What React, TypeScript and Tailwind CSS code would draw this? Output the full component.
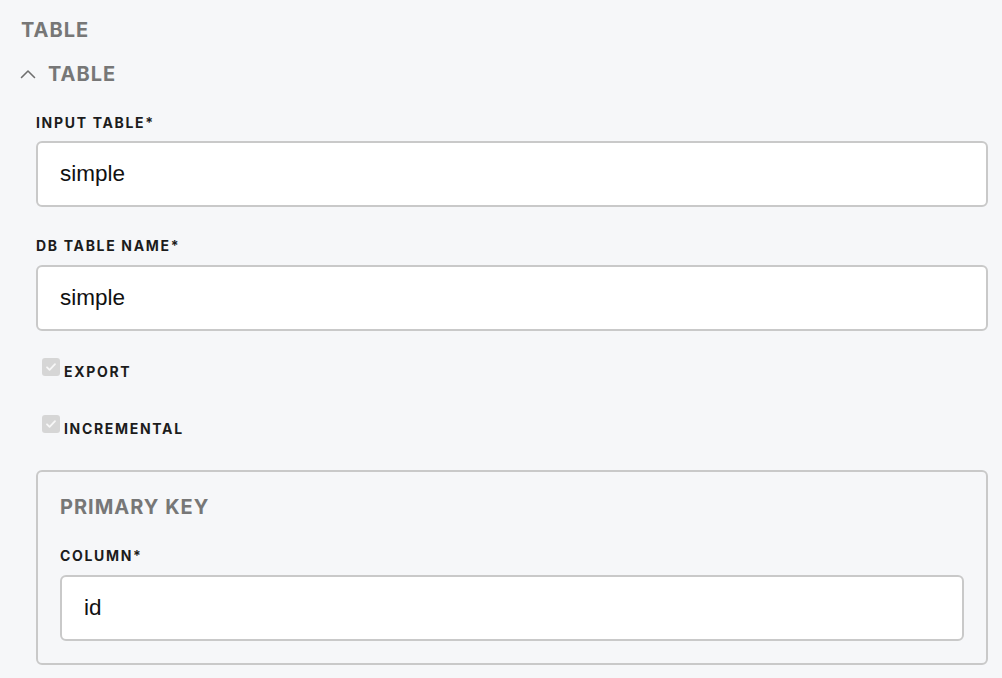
import React from "react";

const labelCls =
  "block font-['Inter',sans-serif] text-[14px] leading-[16px] font-bold tracking-[0.12em] text-[#1c1c1c]";
const headCls =
  "font-['Inter',sans-serif] text-[20px] leading-[24px] font-bold tracking-[0.05em] text-[#777777]";
const inputCls =
  "flex items-center h-[66px] rounded-[6px] border-2 border-[#c9c9c9] bg-white pl-[22px] font-['Liberation_Sans',Arial,sans-serif] text-[22.5px] text-[#111111]";

function Check() {
  return (
    <span className="flex h-[18px] w-[18px] items-center justify-center rounded-[3px] bg-[#d6d6d6]">
      <svg width="12" height="12" viewBox="0 0 12 12" fill="none">
        <path d="M2 6.3l2.6 2.6L10 3.2" stroke="#f7f7f7" strokeWidth="1.8" strokeLinecap="round" strokeLinejoin="round" />
      </svg>
    </span>
  );
}

export default function App() {
  return (
    <div className="min-h-screen bg-[#f6f7f9] pl-[21px] pr-[14px] pt-[18px]">
      <div className={headCls}>TABLE</div>
      <div className="mt-[20px] flex items-center">
        <svg width="16" height="16" viewBox="0 0 16 16" fill="none" className="mr-[12px] -ml-[1px]">
          <path d="M1.5 11.5L8 5l6.5 6.5" stroke="#6f6f6f" strokeWidth="1.6" strokeLinecap="round" strokeLinejoin="round" />
        </svg>
        <span className={headCls}>TABLE</span>
      </div>
      <div className="pl-[15px]">
        <label className={labelCls + " mt-[29px]"}>INPUT TABLE*</label>
        <div className={inputCls + " mt-[10px]"}>simple</div>
        <label className={labelCls + " mt-[31px]"}>DB TABLE NAME*</label>
        <div className={inputCls + " mt-[11px]"}>simple</div>
        <div className="mt-[27px] flex items-start pl-[6px]">
          <Check />
          <span className={labelCls + " mt-[6px] ml-[4px]"}>EXPORT</span>
        </div>
        <div className="mt-[35px] flex items-start pl-[6px]">
          <Check />
          <span className={labelCls + " mt-[6px] ml-[4px]"}>INCREMENTAL</span>
        </div>
        <div className="mt-[33px] rounded-[6px] border-2 border-[#c9c9c9] px-[22px] pt-[23px] pb-[22px]">
          <div className={headCls}>PRIMARY KEY</div>
          <label className={labelCls + " mt-[29px]"}>COLUMN*</label>
          <div className={inputCls + " mt-[11px] h-[65px] pl-[22px]"}>id</div>
        </div>
      </div>
    </div>
  );
}
